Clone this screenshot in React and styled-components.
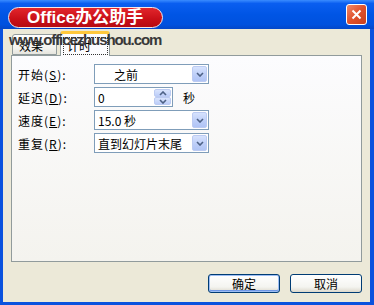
import styled, { createGlobalStyle } from "styled-components";

const GlobalStyle = createGlobalStyle`
  html, body {
    margin: 0;
    padding: 0;
  }
  body {
    width: 374px;
    height: 305px;
    overflow: hidden;
    font-family: "Noto Sans CJK SC", "Liberation Sans", sans-serif;
  }
`;

const Window = styled.div`
  position: relative;
  width: 374px;
  height: 305px;
  display: flex;
  flex-direction: column;
  background: #0a52de;
  box-sizing: border-box;
`;

const TitleBar = styled.div`
  height: 29px;
  flex-shrink: 0;
  display: flex;
  align-items: center;
  justify-content: space-between;
  padding: 0 7px 0 8px;
  box-sizing: border-box;
  background: linear-gradient(
    #3a8cff 0%,
    #0a5ef0 12%,
    #0055e5 50%,
    #0051de 85%,
    #0447c8 100%
  );
`;

const Badge = styled.div`
  align-self: flex-end;
  margin-bottom: 1px;
  width: 155px;
  height: 21px;
  box-sizing: border-box;
  border: 1px solid #f4e6e6;
  border-radius: 11px;
  background: linear-gradient(#e2262c, #c80f17 60%, #b50a12);
  color: #fff;
  font-family: "Liberation Sans", "Noto Sans CJK SC", sans-serif;
  font-weight: bold;
  font-size: 17px;
  line-height: 19px;
  padding-left: 18px;
  white-space: nowrap;
`;

const CloseButton = styled.div`
  width: 21px;
  height: 21px;
  box-sizing: border-box;
  border: 1px solid #fff;
  border-radius: 3px;
  background: linear-gradient(135deg, #f08a6a, #e0512c 50%, #c8401c);
  display: flex;
  align-items: center;
  justify-content: center;
`;

const Watermark = styled.div`
  position: absolute;
  z-index: 5;
  left: 9px;
  top: 32px;
  font-family: "Liberation Sans", sans-serif;
  font-weight: bold;
  font-size: 15px;
  line-height: 15px;
  letter-spacing: -1.1px;
  color: #383838;
  pointer-events: none;
`;

const Client = styled.div`
  flex: 1;
  margin: 0 4px 3px 3px;
  background: #ece9d8;
  display: flex;
  flex-direction: column;
  padding: 2px 8px 9px 8px;
`;

const TabStrip = styled.div`
  height: 24px;
  display: flex;
  align-items: flex-end;
  padding-left: 1px;
  gap: 3px;
`;

const Tab = styled.div`
  position: relative;
  z-index: ${({ $active }) => ($active ? 2 : 1)};
  width: ${({ $active }) => ($active ? 50 : 45)}px;
  height: ${({ $active }) => ($active ? 25 : 21)}px;
  margin-bottom: ${({ $active }) => ($active ? -1 : 0)}px;
  box-sizing: border-box;
  border: 1px solid #919b9c;
  border-bottom: ${({ $active }) => ($active ? "none" : "1px solid #919b9c")};
  border-top: ${({ $active }) =>
    $active ? "3px solid #ffc83c" : "1px solid #919b9c"};
  border-radius: 3px 3px 0 0;
  background: ${({ $active }) =>
    $active ? "#fcfcfe" : "linear-gradient(#ffffff, #f3f3ef 70%, #e6e5de)"};
  font-size: 12px;
  color: #000;
  display: flex;
  align-items: center;
  padding-left: ${({ $active }) => ($active ? 3 : 6)}px;
  padding-top: 2px;
`;

const FocusLabel = styled.span`
  outline: 1px dotted #333;
  padding: 0 16px 0 3px;
  line-height: 16px;
`;

const Panel = styled.div`
  flex: 1;
  position: relative;
  z-index: 1;
  border: 1px solid #919b9c;
  background: linear-gradient(#fcfcfe, #f4f3ee);
  padding: 8px 6px;
  display: flex;
  flex-direction: column;
  gap: 3px;
`;

const Row = styled.div`
  display: flex;
  align-items: center;
  height: 20px;
`;

const Label = styled.div`
  width: 76px;
  font-size: 12px;
  letter-spacing: 1px;
  color: #000;
  white-space: nowrap;

  u {
    text-decoration: underline;
  }
`;

const Field = styled.div`
  width: ${({ $width }) => $width}px;
  height: 20px;
  box-sizing: border-box;
  border: 1px solid #7f9db9;
  background: #fff;
  display: flex;
  align-items: center;
  justify-content: space-between;
  padding: 1px 1px 1px ${({ $indent }) => $indent ?? 3}px;
  font-size: 12px;
  color: #000;
`;

const ArrowButton = styled.div`
  width: 15px;
  height: 16px;
  box-sizing: border-box;
  border: 1px solid #bccbf2;
  border-radius: 2px;
  background: linear-gradient(#d6e2fd, #bccdf8 60%, #b0c4f5);
  display: flex;
  align-items: center;
  justify-content: center;
`;

const Spinner = styled.div`
  width: 17px;
  height: 16px;
  display: flex;
  flex-direction: column;
`;

const SpinHalf = styled.div`
  flex: 1;
  box-sizing: border-box;
  border: 1px solid #bccbf2;
  border-radius: 2px;
  background: linear-gradient(#d9e4fd, #bccdf8);
  display: flex;
  align-items: center;
  justify-content: center;
`;

const Unit = styled.span`
  margin-left: 10px;
  font-size: 12px;
  color: #000;
`;

const Footer = styled.div`
  display: flex;
  justify-content: flex-end;
  gap: 10px;
  padding-top: 12px;
`;

const Button = styled.div`
  width: 72px;
  height: 19px;
  box-sizing: border-box;
  border: 1px solid #003c74;
  border-radius: 3px;
  background: linear-gradient(#ffffff, #f4f4f0 70%, #dcd8cc);
  box-shadow: ${({ $default }) =>
    $default ? "inset 0 0 0 1px #9dbdf3, inset 0 -1px 0 1px #6f97e6" : "none"};
  font-size: 12px;
  line-height: 17px;
  text-align: center;
  color: #000;
`;

const Chevron = ({ up = false }) => (
  <svg width="8" height="5" viewBox="0 0 8 5">
    <path
      d={up ? "M1 4 L4 1 L7 4" : "M1 1 L4 4 L7 1"}
      fill="none"
      stroke="#4d6185"
      strokeWidth="1.6"
    />
  </svg>
);

const Select = ({ width = 115, indent, children }) => (
  <Field $width={width} $indent={indent}>
    <span>{children}</span>
    <ArrowButton>
      <Chevron />
    </ArrowButton>
  </Field>
);

const App = () => (
  <>
    <GlobalStyle />
    <Window>
      <TitleBar>
        <Badge>Office办公助手</Badge>
        <CloseButton>
          <svg width="11" height="11" viewBox="0 0 11 11">
            <path
              d="M1.5 1.5 L9.5 9.5 M9.5 1.5 L1.5 9.5"
              stroke="#fff"
              strokeWidth="2"
            />
          </svg>
        </CloseButton>
      </TitleBar>
      <Client>
        <TabStrip>
          <Tab>效果</Tab>
          <Tab $active>
            <FocusLabel>计时</FocusLabel>
          </Tab>
        </TabStrip>
        <Panel>
          <Row>
            <Label>
              开始(<u>S</u>):
            </Label>
            <Select indent={19}>之前</Select>
          </Row>
          <Row>
            <Label>
              延迟(<u>D</u>):
            </Label>
            <Field $width={79}>
              <span>0</span>
              <Spinner>
                <SpinHalf>
                  <Chevron up />
                </SpinHalf>
                <SpinHalf>
                  <Chevron />
                </SpinHalf>
              </Spinner>
            </Field>
            <Unit>秒</Unit>
          </Row>
          <Row>
            <Label>
              速度(<u>E</u>):
            </Label>
            <Select>15.0 秒</Select>
          </Row>
          <Row>
            <Label>
              重复(<u>R</u>):
            </Label>
            <Select>直到幻灯片末尾</Select>
          </Row>
        </Panel>
        <Footer>
          <Button $default>确定</Button>
          <Button>取消</Button>
        </Footer>
      </Client>
      <Watermark>www.officezhushou.com</Watermark>
    </Window>
  </>
);

export default App;
